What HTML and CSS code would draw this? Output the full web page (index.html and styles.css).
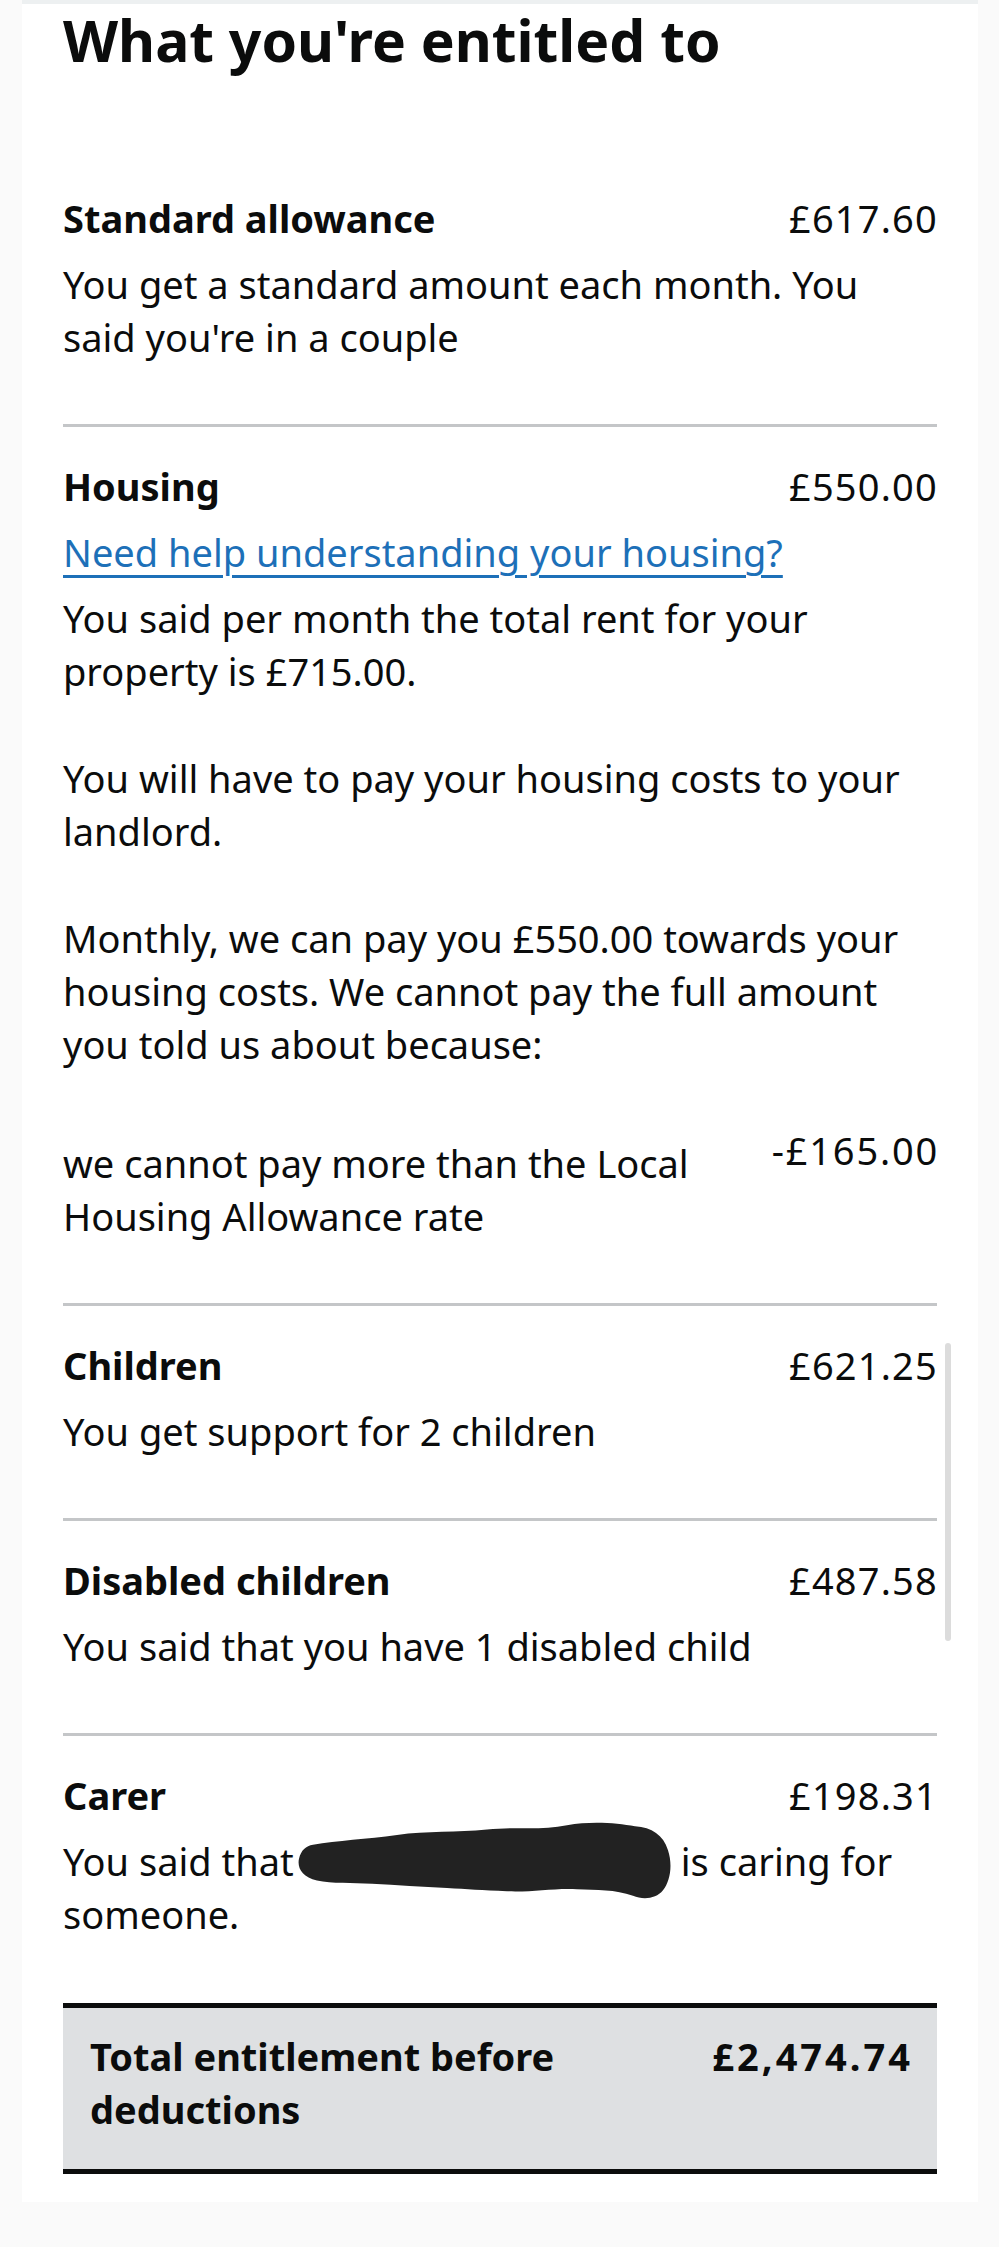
FILE: index.html
```html
<!DOCTYPE html>
<html lang="en">
<head>
<meta charset="utf-8">
<title>What you're entitled to</title>
<link rel="stylesheet" href="styles.css">
</head>
<body>
<main class="page">
  <h1 class="title">What you're entitled to</h1>

  <section class="item">
    <div class="item-head">
      <h2 class="item-name">Standard allowance</h2>
      <span class="item-amount">£617.60</span>
    </div>
    <p class="item-text">You get a standard amount each month. You<br>said you're in a couple</p>
  </section>

  <section class="item">
    <div class="item-head">
      <h2 class="item-name">Housing</h2>
      <span class="item-amount">£550.00</span>
    </div>
    <a class="help-link" href="#">Need help understanding your housing?</a>
    <p class="item-text">You said per month the total rent for your<br>property is £715.00.</p>
    <p class="item-text">You will have to pay your housing costs to your<br>landlord.</p>
    <p class="item-text">Monthly, we can pay you £550.00 towards your<br>housing costs. We cannot pay the full amount<br>you told us about because:</p>
    <div class="deduction">
      <p class="deduction-text">we cannot pay more than the Local<br>Housing Allowance rate</p>
      <span class="deduction-amount">-£165.00</span>
    </div>
  </section>

  <section class="item">
    <div class="item-head">
      <h2 class="item-name">Children</h2>
      <span class="item-amount">£621.25</span>
    </div>
    <p class="item-text">You get support for 2 children</p>
  </section>

  <section class="item">
    <div class="item-head">
      <h2 class="item-name">Disabled children</h2>
      <span class="item-amount">£487.58</span>
    </div>
    <p class="item-text">You said that you have 1 disabled child</p>
  </section>

  <section class="item item-last">
    <div class="item-head">
      <h2 class="item-name">Carer</h2>
      <span class="item-amount">£198.31</span>
    </div>
    <p class="item-text">You said that<span class="redact"><svg class="redact-blob" viewBox="0 0 374 72" width="374" height="78" preserveAspectRatio="none" aria-hidden="true"><path d="M16 21 C40 17 70 16 100 12 C130 8 160 10 190 7 C220 4 245 8 270 3 C295 -1 320 1 338 4 C355 5 366 12 371 26 C376 40 373 55 366 63 C359 71 346 72 336 68 C318 62 300 63 280 62 C255 61 235 65 210 64 C185 63 170 62 150 61 C125 60 100 58 75 57 C55 56 35 57 20 54 C5 51 0 42 2 34 C4 26 9 22 16 21 Z" fill="#222"/></svg></span>is caring for<br>someone.</p>
  </section>

  <div class="total">
    <span class="total-label">Total entitlement before<br>deductions</span>
    <span class="total-amount">£2,474.74</span>
  </div>
</main>
<div class="scroll-thumb"></div>
</body>
</html>
```

FILE: styles.css
```css
html, body {
  margin: 0;
  padding: 0;
}

body {
  background: #fafafa;
  font-family: "Noto Sans", "Liberation Sans", sans-serif;
  color: #0b0c0c;
  position: relative;
  min-height: 2247px;
}

.page {
  width: 956px;
  margin-left: 22px;
  box-sizing: border-box;
  background: #ffffff;
  border-top: 4px solid #edf0f1;
  padding: 0 41px 28px;
}

.title {
  margin: 6px 0 89px;
  font-size: 57px;
  line-height: 60px;
  font-weight: 700;
  letter-spacing: 0;
}

.item {
  padding: 33px 0 60px;
  border-bottom: 3px solid #c4c6c8;
}

.item-last {
  border-bottom: none;
  padding-bottom: 62px;
}

.item-head {
  display: flex;
  justify-content: space-between;
  align-items: baseline;
}

.item-name {
  margin: 0;
  font-size: 38px;
  line-height: 53px;
  font-weight: 700;
}

.item-amount {
  font-size: 38px;
  line-height: 53px;
  letter-spacing: 1.2px;
  margin-right: -1px;
}

.item-text {
  margin: 13px 0 0;
  font-size: 38px;
  line-height: 53px;
}

.item-text + .item-text {
  margin-top: 54px;
}

.help-link {
  display: block;
  margin-top: 13px;
  font-size: 38px;
  line-height: 53px;
  color: #1d70b8;
  text-decoration: underline;
  text-decoration-thickness: 3px;
  text-underline-offset: 8px;
}

.deduction {
  display: flex;
  justify-content: space-between;
  align-items: flex-start;
  margin-top: 53px;
}

.deduction-text {
  margin: 13px 0 0;
  font-size: 38px;
  line-height: 53px;
}

.deduction-amount {
  font-size: 38px;
  line-height: 53px;
  letter-spacing: 1.8px;
  margin-right: -2px;
}

.redact {
  display: inline-block;
  position: relative;
  width: 387px;
  height: 0;
}

.redact-blob {
  position: absolute;
  left: 3px;
  bottom: -24px;
  overflow: visible;
}

.total {
  display: flex;
  justify-content: space-between;
  align-items: flex-start;
  background: #dee0e2;
  border-top: 5px solid #0b0c0c;
  border-bottom: 5px solid #0b0c0c;
  padding: 22px 27px 33px;
  font-size: 38px;
  line-height: 53px;
  font-weight: 700;
}

.total-amount {
  letter-spacing: 3px;
  margin-right: -3px;
}

.scroll-thumb {
  position: absolute;
  left: 945px;
  top: 1343px;
  width: 6px;
  height: 298px;
  border-radius: 3px;
  background: #dcdcdc;
}
```
